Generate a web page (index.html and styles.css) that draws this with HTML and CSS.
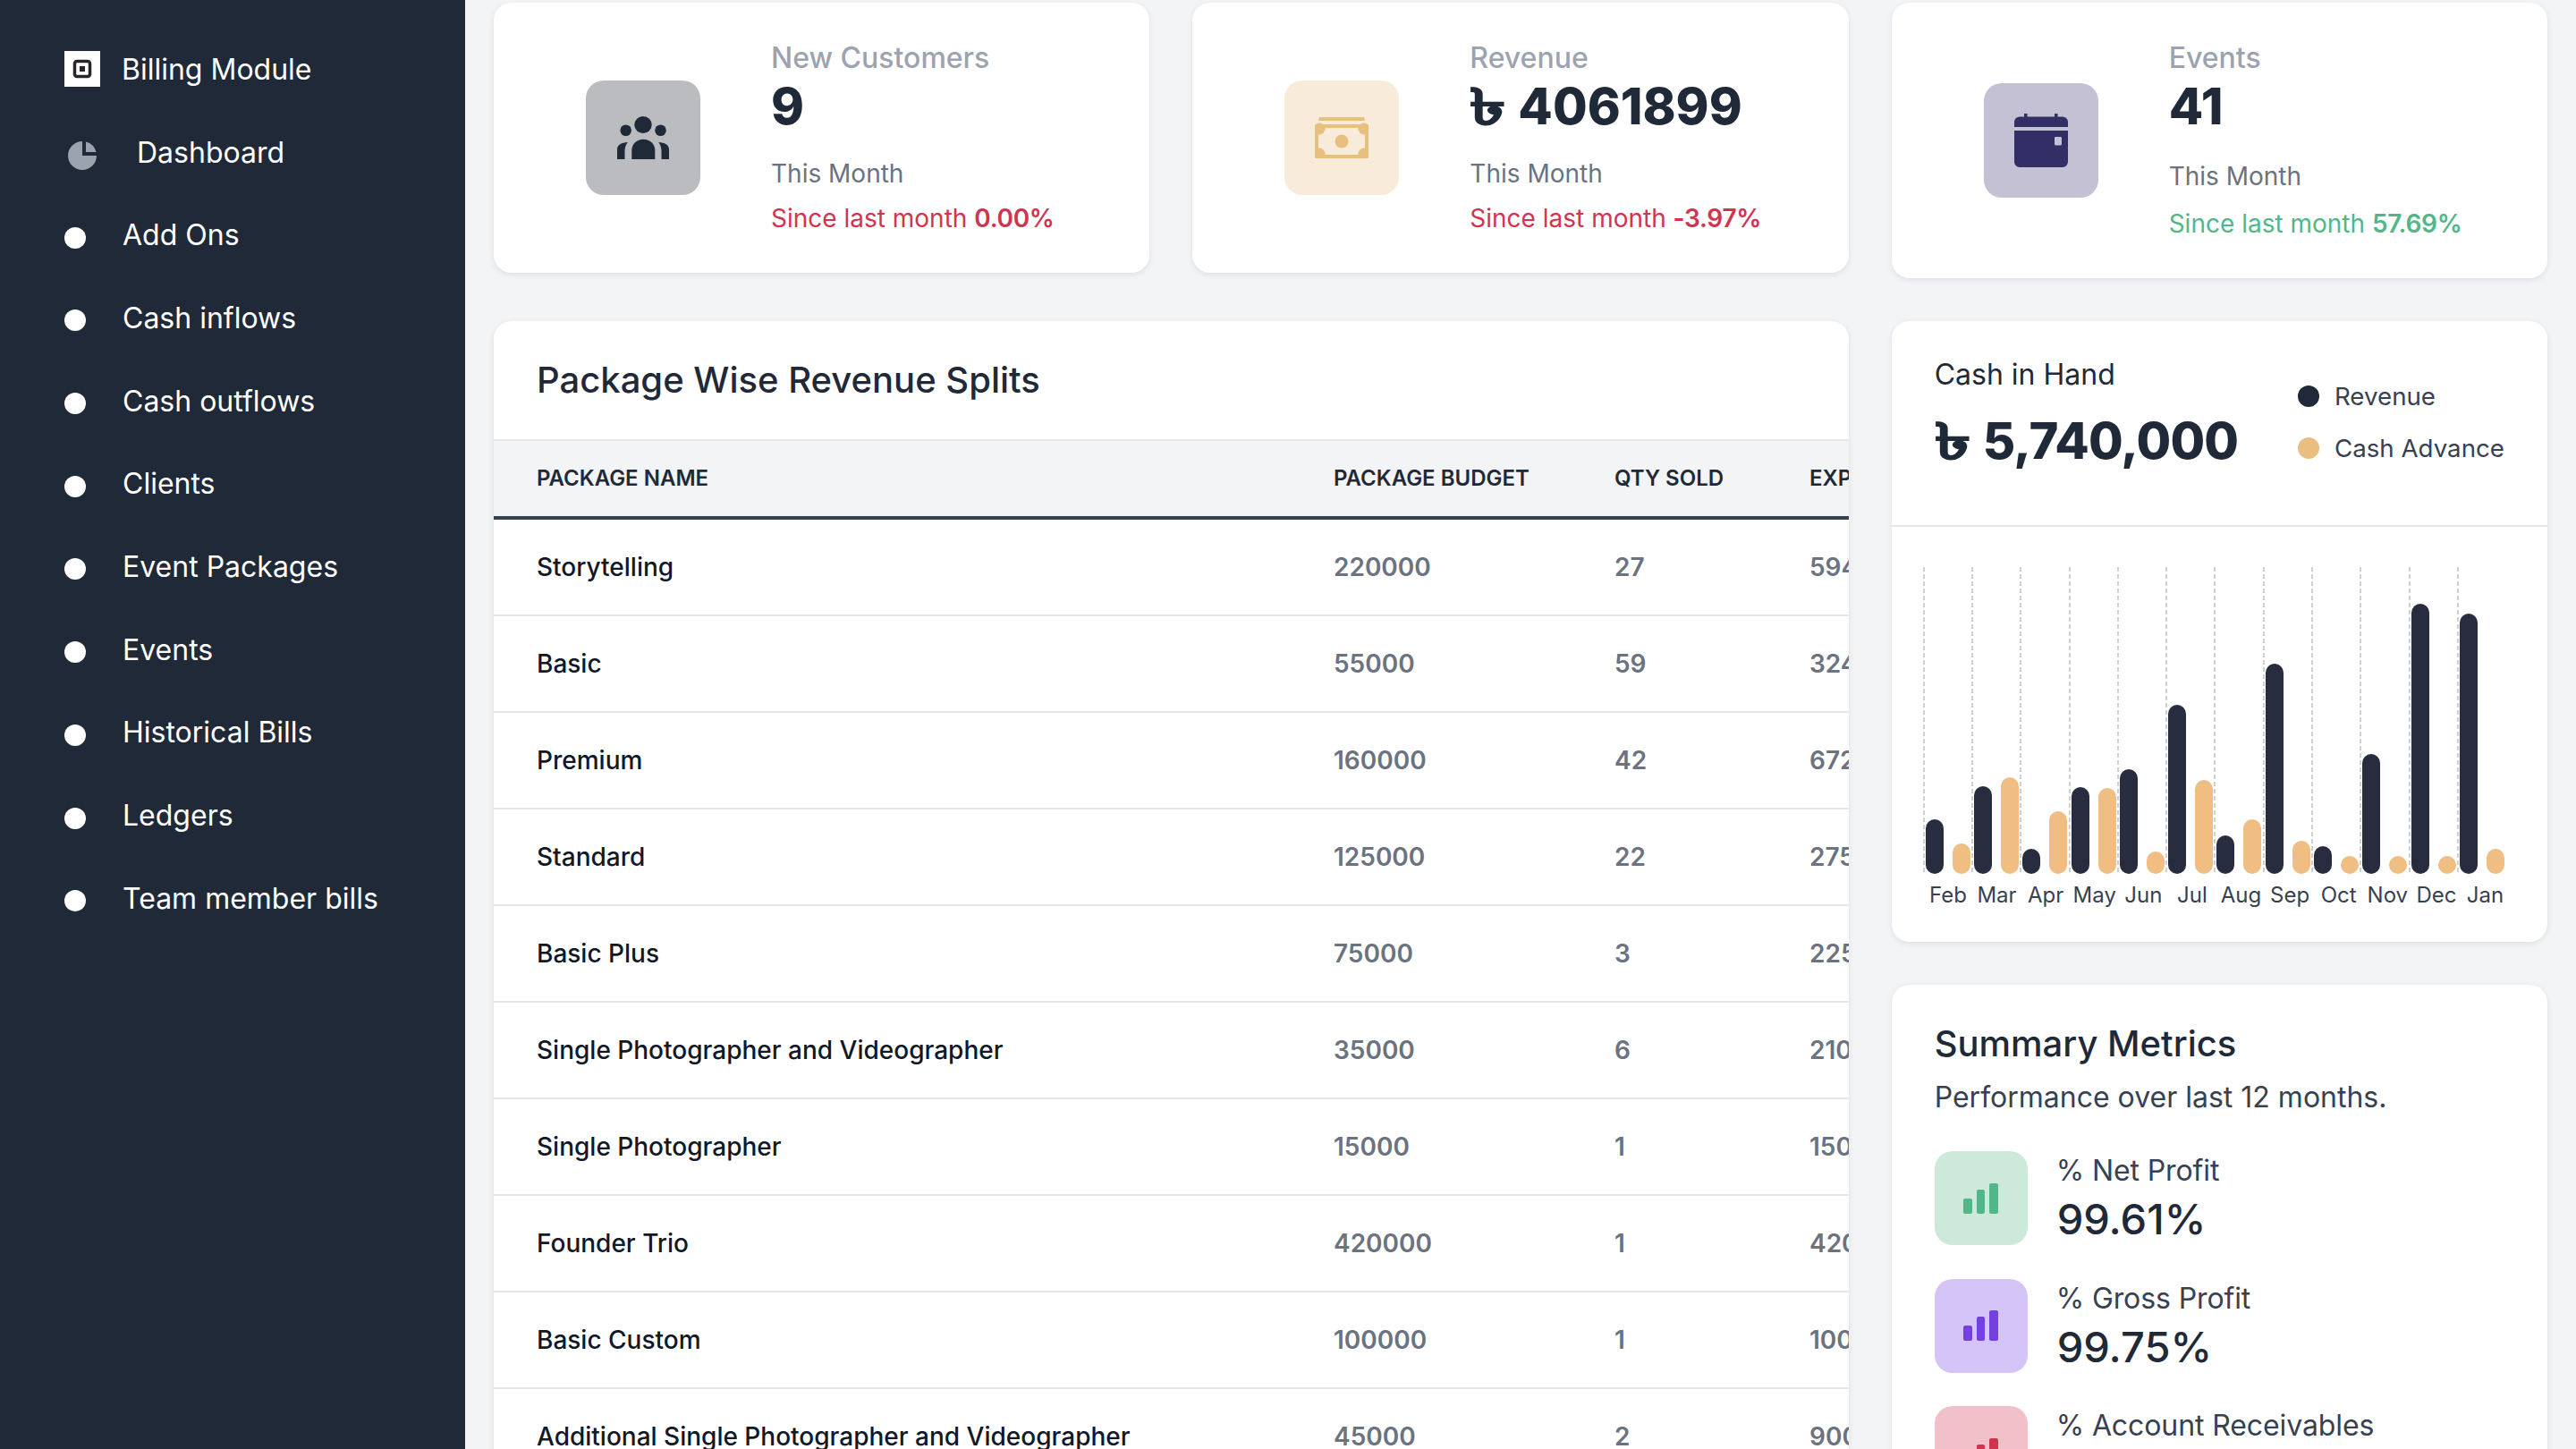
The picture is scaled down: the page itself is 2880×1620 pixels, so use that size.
FILE: index.html
```html
<!DOCTYPE html>
<html lang="en">
<head>
<meta charset="utf-8">
<title>Billing Module</title>
<link rel="stylesheet" href="styles.css">
</head>
<body>
<div class="app">
  <aside class="sidebar">
    <div class="nav-row brand">
      <svg class="logo" viewBox="0 0 40 40"><rect width="40" height="40" fill="#fff"/><rect x="11.5" y="11.5" width="17" height="17" rx="2.5" fill="none" stroke="#2a2627" stroke-width="3.5"/><rect x="17" y="17" width="6" height="6" fill="#2a2627"/></svg>
      <span>Billing Module</span>
    </div>
    <div class="nav-row dash">
      <svg class="pie" viewBox="0 0 20 20" fill="#9ca3af"><path d="M2 10a8 8 0 018-8v8h8a8 8 0 11-16 0z"/><path d="M12 2.252A8.014 8.014 0 0117.748 8H12V2.252z"/></svg>
      <span>Dashboard</span>
    </div>
    <div class="nav-row"><i class="dot"></i><span>Add Ons</span></div>
    <div class="nav-row"><i class="dot"></i><span>Cash inflows</span></div>
    <div class="nav-row"><i class="dot"></i><span>Cash outflows</span></div>
    <div class="nav-row"><i class="dot"></i><span>Clients</span></div>
    <div class="nav-row"><i class="dot"></i><span>Event Packages</span></div>
    <div class="nav-row"><i class="dot"></i><span>Events</span></div>
    <div class="nav-row"><i class="dot"></i><span>Historical Bills</span></div>
    <div class="nav-row"><i class="dot"></i><span>Ledgers</span></div>
    <div class="nav-row"><i class="dot"></i><span>Team member bills</span></div>
  </aside>

  <main class="main">
    <section class="card stat">
      <div class="stat-icon bg-grey">
        <svg width="58" height="48" viewBox="0 0 58 48" fill="#1f2937"><ellipse cx="29" cy="9.5" rx="9.7" ry="9.5"/><circle cx="9.7" cy="15.7" r="6.3"/><circle cx="48.5" cy="15.7" r="6.3"/><path d="M16.3 48V38C16.3 31 22 25.7 29.3 25.7S42.3 31 42.3 38V48Z"/><path d="M0 48V37C0 32 5 29.3 11.7 29C9 33 8.5 36 8.5 40V48Z"/><path d="M58 48V37C58 32 53 29.3 46.3 29C49 33 49.5 36 49.5 40V48Z"/></svg>
      </div>
      <div class="stat-text">
        <div class="stat-label">New Customers</div>
        <div class="stat-value">9</div>
        <div class="stat-period">This Month</div>
        <div class="stat-delta red">Since last month <b>0.00%</b></div>
      </div>
    </section>

    <section class="card stat">
      <div class="stat-icon bg-cream">
        <svg width="60" height="46" viewBox="0 0 60 46"><path d="M5 0H55L56 4H4Z" fill="#e9bf7f"/><rect y="8" width="60" height="38" rx="3" fill="#e9bf7f"/><rect x="4" y="12" width="52" height="30" fill="#f8ebd9"/><g fill="#e9bf7f"><circle cx="5" cy="13" r="6.5"/><circle cx="55" cy="13" r="6.5"/><circle cx="5" cy="41" r="6.5"/><circle cx="55" cy="41" r="6.5"/><circle cx="30" cy="27" r="7.5"/></g></svg>
      </div>
      <div class="stat-text">
        <div class="stat-label">Revenue</div>
        <div class="stat-value"><span class="taka">৳</span>4061899</div>
        <div class="stat-period">This Month</div>
        <div class="stat-delta red">Since last month <b>-3.97%</b></div>
      </div>
    </section>

    <section class="card stat stat-tall">
      <div class="stat-icon bg-lilac">
        <svg width="60" height="60" viewBox="0 0 60 60" fill="#322f66"><rect x="11" y="0" width="3.5" height="6"/><rect x="45" y="0" width="3.5" height="6"/><path d="M0 15V9A6 6 0 016 3.500H54A6 6 0 0160 9V15Z"/><path fill-rule="evenodd" d="M0 19H60V54A6 6 0 0154 60H6A6 6 0 010 54ZM45 27V34A1.500 1.500 0 0046.500 35.500H51.500A1.500 1.500 0 0053 34V27A1.500 1.500 0 0051.500 26H46.500A1.500 1.500 0 0045 27Z"/></svg>
      </div>
      <div class="stat-text">
        <div class="stat-label">Events</div>
        <div class="stat-value">41</div>
        <div class="stat-period">This Month</div>
        <div class="stat-delta green">Since last month <b>57.69%</b></div>
      </div>
    </section>

    <section class="card table-card">
      <h2 class="table-title">Package Wise Revenue Splits</h2>
      <table class="table">
        <colgroup><col class="c1"><col class="c2"><col class="c3"><col class="c4"></colgroup>
        <thead><tr><th>Package Name</th><th>Package Budget</th><th>Qty Sold</th><th>Expected Revenue</th></tr></thead>
        <tbody>
          <tr><td>Storytelling</td><td>220000</td><td>27</td><td>5940000</td></tr>
          <tr><td>Basic</td><td>55000</td><td>59</td><td>3245000</td></tr>
          <tr><td>Premium</td><td>160000</td><td>42</td><td>6720000</td></tr>
          <tr><td>Standard</td><td>125000</td><td>22</td><td>2750000</td></tr>
          <tr><td>Basic Plus</td><td>75000</td><td>3</td><td>225000</td></tr>
          <tr><td>Single Photographer and Videographer</td><td>35000</td><td>6</td><td>210000</td></tr>
          <tr><td>Single Photographer</td><td>15000</td><td>1</td><td>150000</td></tr>
          <tr><td>Founder Trio</td><td>420000</td><td>1</td><td>420000</td></tr>
          <tr><td>Basic Custom</td><td>100000</td><td>1</td><td>100000</td></tr>
          <tr><td>Additional Single Photographer and Videographer</td><td>45000</td><td>2</td><td>90000</td></tr>
        </tbody>
      </table>
    </section>

    <div class="side">
      <section class="card cash">
        <header class="cash-head">
          <div>
            <div class="cash-label">Cash in Hand</div>
            <div class="cash-value"><span class="taka">৳</span>5,740,000</div>
          </div>
          <ul class="legend">
            <li><i class="legend-dot navy"></i>Revenue</li>
            <li><i class="legend-dot gold"></i>Cash Advance</li>
          </ul>
        </header>
        <div class="chart">
          <div class="bars">
            <div class="group"><i class="bar navy-bar" style="height:61px"></i><i class="bar gold-bar" style="height:34px"></i></div>
            <div class="group"><i class="bar navy-bar" style="height:98px"></i><i class="bar gold-bar" style="height:108px"></i></div>
            <div class="group"><i class="bar navy-bar" style="height:28px"></i><i class="bar gold-bar" style="height:70px"></i></div>
            <div class="group"><i class="bar navy-bar" style="height:97px"></i><i class="bar gold-bar" style="height:96px"></i></div>
            <div class="group"><i class="bar navy-bar" style="height:117px"></i><i class="bar gold-bar" style="height:25px"></i></div>
            <div class="group"><i class="bar navy-bar" style="height:189px"></i><i class="bar gold-bar" style="height:105px"></i></div>
            <div class="group"><i class="bar navy-bar" style="height:43px"></i><i class="bar gold-bar" style="height:61px"></i></div>
            <div class="group"><i class="bar navy-bar" style="height:235px"></i><i class="bar gold-bar" style="height:37px"></i></div>
            <div class="group"><i class="bar navy-bar" style="height:31px"></i><i class="bar gold-bar" style="height:20px"></i></div>
            <div class="group"><i class="bar navy-bar" style="height:134px"></i><i class="bar gold-bar" style="height:20px"></i></div>
            <div class="group"><i class="bar navy-bar" style="height:302px"></i><i class="bar gold-bar" style="height:20px"></i></div>
            <div class="group"><i class="bar navy-bar" style="height:291px"></i><i class="bar gold-bar" style="height:28px"></i></div>
          </div>
          <div class="months"><span>Feb</span><span>Mar</span><span>Apr</span><span>May</span><span>Jun</span><span>Jul</span><span>Aug</span><span>Sep</span><span>Oct</span><span>Nov</span><span>Dec</span><span>Jan</span></div>
        </div>
      </section>

      <section class="card summary">
        <h2 class="summary-title">Summary Metrics</h2>
        <p class="summary-sub">Performance over last 12 months.</p>
        <div class="metric">
          <div class="metric-icon bg-green"><svg width="40" height="34" viewBox="0 0 40 34" fill="#52b788"><rect x="0" y="17" width="10" height="17" rx="2"/><rect x="15" y="7" width="9" height="27" rx="2"/><rect x="29" y="0" width="10" height="34" rx="2"/></svg></div>
          <div><div class="metric-label">% Net Profit</div><div class="metric-value">99.61%</div></div>
        </div>
        <div class="metric">
          <div class="metric-icon bg-purple"><svg width="40" height="34" viewBox="0 0 40 34" fill="#7540e0"><rect x="0" y="17" width="10" height="17" rx="2"/><rect x="15" y="7" width="9" height="27" rx="2"/><rect x="29" y="0" width="10" height="34" rx="2"/></svg></div>
          <div><div class="metric-label">% Gross Profit</div><div class="metric-value">99.75%</div></div>
        </div>
        <div class="metric">
          <div class="metric-icon bg-pink"><svg width="40" height="34" viewBox="0 0 40 34" fill="#d1344f"><rect x="0" y="17" width="10" height="17" rx="2"/><rect x="15" y="7" width="9" height="27" rx="2"/><rect x="29" y="0" width="10" height="34" rx="2"/></svg></div>
          <div><div class="metric-label">% Account Receivables</div><div class="metric-value">0.25%</div></div>
        </div>
      </section>
    </div>
  </main>
</div>
</body>
</html>
```
FILE: styles.css
```css
* { box-sizing: border-box; }
html, body { margin: 0; height: 100%; overflow: hidden; }
body { font-family: Inter, "Noto Sans", "DejaVu Sans", sans-serif; background: #f3f4f6; color: #1f2937; }
.app { display: flex; height: 1620px; overflow: hidden; }

.sidebar { flex: 0 0 520px; background: #1f2937; color: #fff; padding: 31px 0 0 72px; }
.nav-row { display: flex; align-items: center; height: 92.7px; font-size: 32px; }
.dot { width: 24px; height: 24px; border-radius: 50%; background: #fff; margin: 6px 41px 0 0; }
.brand .logo { width: 40px; height: 40px; margin-right: 24px; }
.dash .pie { width: 40px; height: 40px; margin: 8px 41px 0 0; }

.main { flex: 1; display: grid; grid-template-columns: repeat(3, 733.33px); grid-template-rows: 308px auto; gap: 48px; padding: 3px 32px 0; align-items: start; overflow: hidden; }
.card { background: #fff; border-radius: 20px; box-shadow: 0 2px 6px rgba(31, 41, 55, .1); }

.stat { display: flex; align-items: center; padding: 38px 40px 40px 103px; gap: 79px; }
.stat-icon { flex: 0 0 128px; height: 128px; margin-top: 2px; border-radius: 20px; display: flex; align-items: center; justify-content: center; }
.bg-grey { background: #bbbcc0; }
.bg-cream { background: #f8ebd9; }
.bg-lilac { background: #c3c1d3; }
.stat-label { font-size: 32px; line-height: 48px; font-weight: 500; color: #9ca3af; }
.stat-value { font-size: 56px; line-height: 60px; font-weight: 800; color: #1f2937; white-space: nowrap; }
.taka { display: inline-block; width: 54px; transform: scaleX(1.45); transform-origin: left center; -webkit-text-stroke: 1px currentColor; }
.stat-period { font-size: 28px; line-height: 42px; margin-top: 24px; color: #6b7280; }
.stat-delta { font-size: 28px; line-height: 42px; margin-top: 8px; white-space: nowrap; }
.stat-delta b { font-weight: 600; letter-spacing: -.3px; }
.stat-tall .stat-period { margin-top: 27px; }
.stat-tall .stat-delta { margin-top: 11px; }
.red { color: #d1344f; }
.green { color: #52b788; }

.table-card { grid-column: span 2; overflow: hidden; height: 1400px; }
.table-title { margin: 0; height: 134px; padding: 36px 48px 0; font-size: 40px; line-height: 60px; font-weight: 500; color: #1f2937; border-bottom: 2px solid #e5e7eb; }
.table { width: 1700px; table-layout: fixed; border-collapse: separate; border-spacing: 0; }
.c1 { width: 891px; }
.c2 { width: 314px; }
.c3 { width: 218px; }
.table th { height: 88px; padding: 0 0 2px 48px; background: #f3f4f6; border-bottom: 4px solid #374151; font-size: 24px; font-weight: 600; text-transform: uppercase; text-align: left; color: #1f2937; white-space: nowrap; }
.table td { height: 108px; padding: 0 0 0 48px; border-bottom: 2px solid #e5e7eb; font-size: 28px; font-weight: 600; color: #6b7280; white-space: nowrap; }
.table td:first-child { color: #111827; font-weight: 500; }

.side { display: flex; flex-direction: column; gap: 48px; }
.cash { height: 694px; }
.cash-head { display: flex; justify-content: space-between; height: 230px; padding: 36px 48px 0; border-bottom: 2px solid #e5e7eb; }
.cash-label { font-size: 32px; line-height: 48px; color: #1f2937; }
.cash-value { font-size: 56px; line-height: 72px; margin-top: 14px; font-weight: 800; letter-spacing: -.8px; white-space: nowrap; }
.legend { list-style: none; margin: 0; padding: 19px 0 0; font-size: 27.7px; color: #374151; }
.legend li { display: flex; align-items: center; height: 58px; gap: 17px; }
.legend-dot { width: 24px; height: 24px; border-radius: 50%; }
.navy { background: #1f2937; }
.gold { background: #e9bf7f; }

.chart { padding: 45px 0 0 35px; }
.bars { display: flex; height: 343px; }
.group { flex: 0 0 54.3px; display: flex; align-items: flex-end; gap: 10px; padding-left: 3px; background: repeating-linear-gradient(to bottom, #cfcfcf 0 5px, transparent 5px 8px) left top / 2px 100% no-repeat; }
.bar { width: 20px; border-radius: 10px; }
.navy-bar { background: #282c3f; }
.gold-bar { background: #f0be82; }
.months { display: flex; margin-top: 9px; padding-left: 1px; font-size: 24px; line-height: 30px; color: #374151; }
.months span { flex: 0 0 54.6px; text-align: center; white-space: nowrap; }

.summary { padding: 36px 48px 0; height: 800px; }
.summary-title { margin: 0; font-size: 40px; line-height: 60px; font-weight: 500; color: #1f2937; }
.summary-sub { margin: 0; font-size: 32px; line-height: 48px; color: #374151; padding-top: 6px; padding-bottom: 36px; }
.metric { display: flex; gap: 33px; height: 105px; margin-bottom: 37.5px; }
.metric-icon { flex: 0 0 104px; height: 105px; border-radius: 20px; display: flex; align-items: center; justify-content: center; }
.bg-green { background: #cde9da; }
.bg-purple { background: #d4c4f7; }
.bg-pink { background: #f2c0c8; }
.metric-label { font-size: 32px; line-height: 44px; letter-spacing: -.1px; margin-left: -1px; color: #374151; }
.metric-value { font-size: 47px; line-height: 64px; font-weight: 500; color: #1f2937; }
```
